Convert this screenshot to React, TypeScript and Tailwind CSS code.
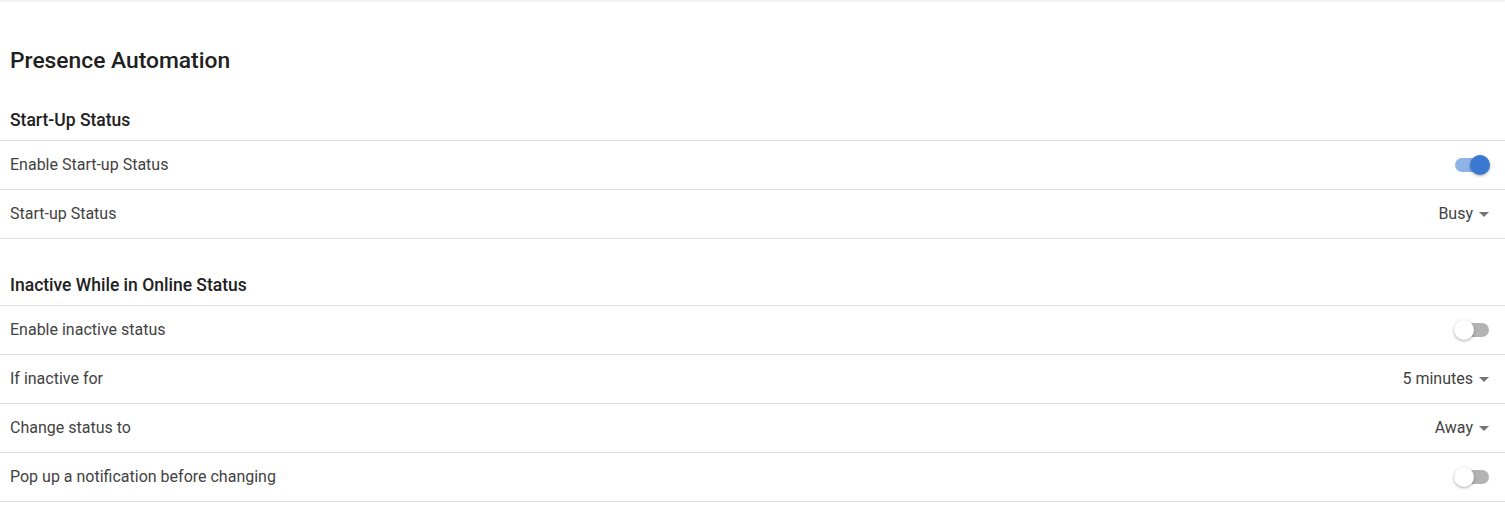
import React, { useState } from "react";

type Row =
  | { kind: "toggle"; label: string; on: boolean }
  | { kind: "select"; label: string; value: string };

const sections: { title: string; rows: Row[] }[] = [
  {
    title: "Start-Up Status",
    rows: [
      { kind: "toggle", label: "Enable Start-up Status", on: true },
      { kind: "select", label: "Start-up Status", value: "Busy" },
    ],
  },
  {
    title: "Inactive While in Online Status",
    rows: [
      { kind: "toggle", label: "Enable inactive status", on: false },
      { kind: "select", label: "If inactive for", value: "5 minutes" },
      { kind: "select", label: "Change status to", value: "Away" },
      { kind: "toggle", label: "Pop up a notification before changing", on: false },
    ],
  },
];

function Toggle({ initial }: { initial: boolean }) {
  const [on, setOn] = useState(initial);
  return (
    <button
      type="button"
      onClick={() => setOn(!on)}
      className="relative mr-[15px] h-[20px] w-[36px]"
      aria-pressed={on}
    >
      <span
        className={`absolute left-[1px] top-[3px] h-[14px] w-[34px] rounded-full ${
          on ? "bg-[#8fb3e6]" : "bg-[#b3b3b3]"
        }`}
      />
      <span
        className={`absolute top-0 h-[20px] w-[20px] rounded-full shadow-[0_1px_3px_rgba(0,0,0,0.35)] ${
          on ? "left-[16px] bg-[#3a78d2]" : "left-0 bg-white"
        }`}
      />
    </button>
  );
}

function Select({ value }: { value: string }) {
  return (
    <div className="mr-[16px] flex items-center gap-[6px] text-[16px] text-[#424242]">
      <span>{value}</span>
      <svg width="10" height="5" viewBox="0 0 10 5" className="mt-[1px]">
        <path d="M0 0h10L5 5z" fill="#757575" />
      </svg>
    </div>
  );
}

export default function App() {
  return (
    <div className="min-h-[506px] bg-white font-['Roboto',sans-serif]">
      <div className="h-[3px] bg-gradient-to-b from-[#f0f0f0] to-white" />
      <h1 className="mt-[44px] pl-[10px] text-[22.8px] leading-[28px] font-medium text-[#212121]">
        Presence Automation
      </h1>
      <div className="mt-[33px]">
        {sections.map((s, i) => (
          <section key={s.title} className={i > 0 ? "mt-[34px]" : ""}>
            <h2 className="border-b border-[#e0e0e0] pb-[8px] pl-[10px] text-[17.5px] leading-[24px] font-medium text-[#212121]">
              {s.title}
            </h2>
            {s.rows.map((r) => (
              <div
                key={r.label}
                className="flex h-[49px] items-center justify-between border-b border-[#e0e0e0] pl-[10px]"
              >
                <span className="text-[16px] text-[#424242]">{r.label}</span>
                {r.kind === "toggle" ? <Toggle initial={r.on} /> : <Select value={r.value} />}
              </div>
            ))}
          </section>
        ))}
      </div>
    </div>
  );
}
